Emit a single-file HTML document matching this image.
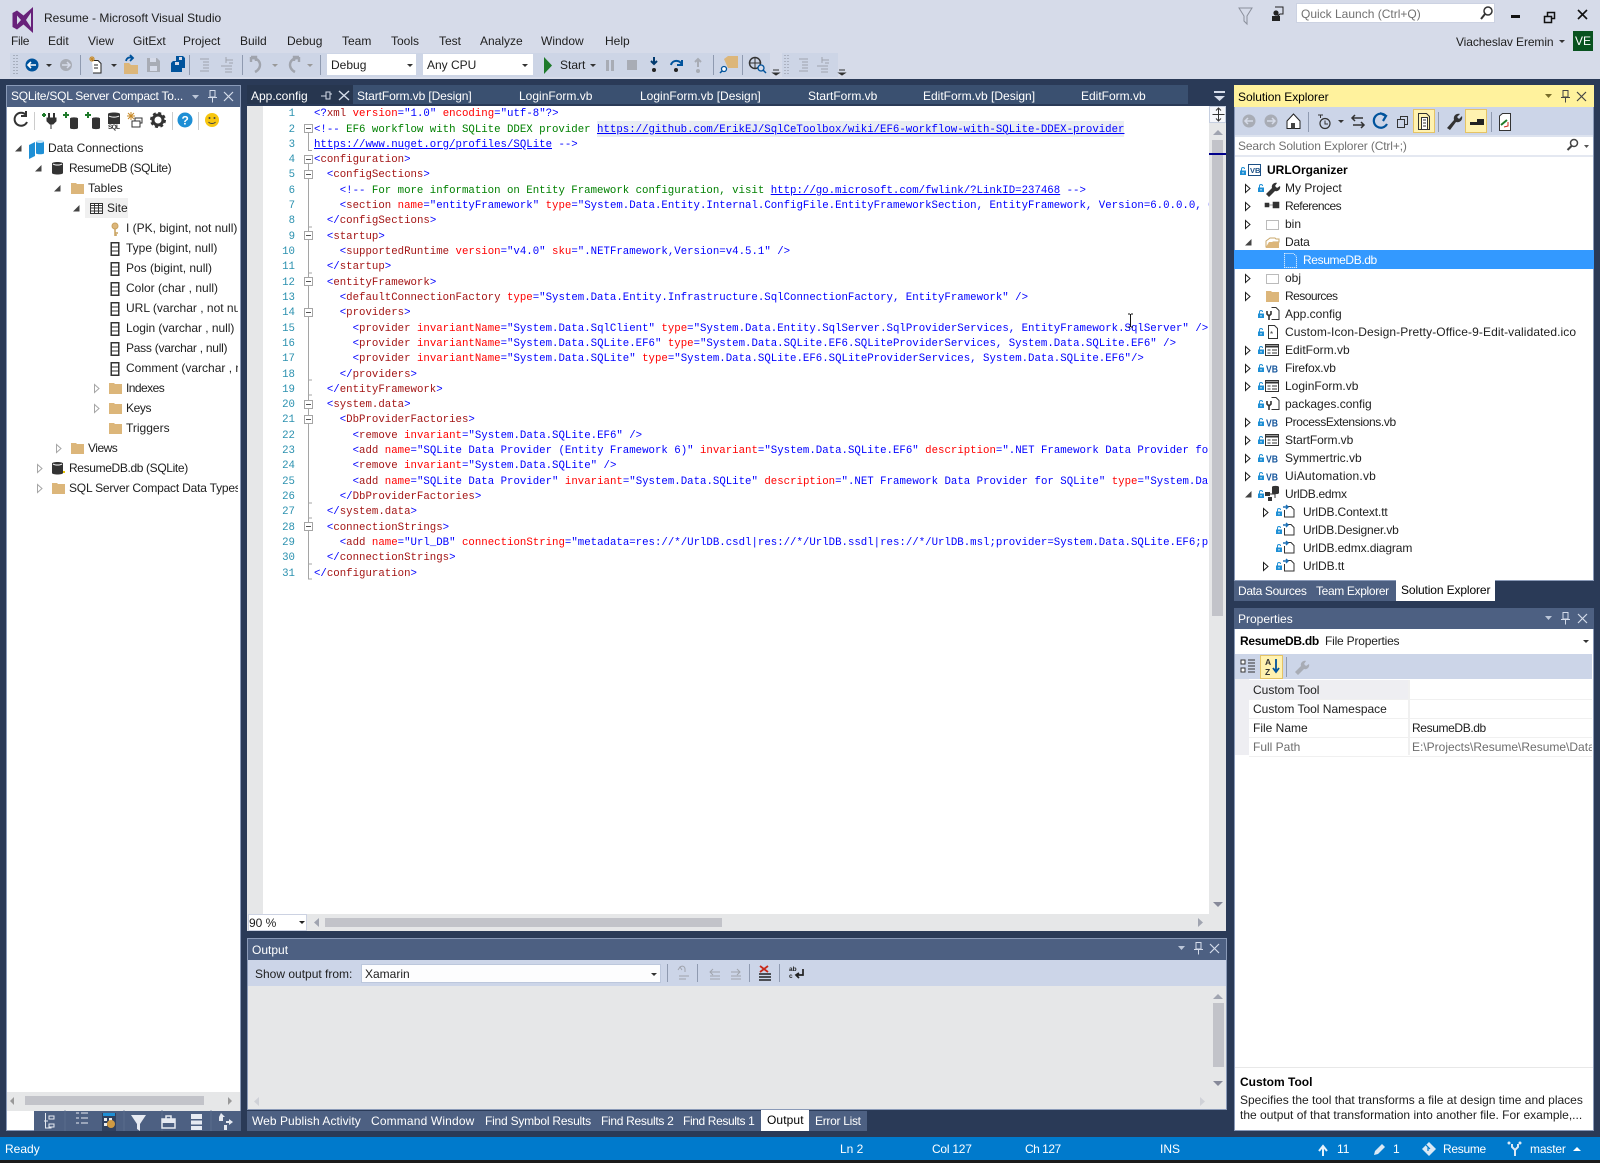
<!DOCTYPE html>
<html><head><meta charset="utf-8"><title>Resume - Microsoft Visual Studio</title>
<style>
html,body{margin:0;padding:0}
body{width:1600px;height:1163px;position:relative;overflow:hidden;background:#d6dbe9;font-family:"Liberation Sans",sans-serif;font-size:12px;color:#1e1e1e}
.b{position:absolute}
.t{position:absolute;white-space:nowrap;line-height:16px;font-size:12px}
.w{color:#fff}
.clip{position:absolute;overflow:hidden}
pre{margin:0;font-family:"Liberation Mono",monospace;font-size:10.72px;line-height:15.31px;white-space:pre}
.d{color:#0000ff}.e{color:#a31515}.a{color:#ff0000}.c{color:#008000}
.l{color:#0000ff;text-decoration:underline}
#nums{position:absolute;left:263px;top:107.2px;width:32px;text-align:right;color:#2b91af}
svg{position:absolute;left:0;top:0}
</style></head><body>
<!-- frame regions -->
<div class="b" style="left:0;top:79px;width:1600px;height:1058px;background:#2a3a57"></div>
<div class="b" style="left:0;top:1137px;width:1600px;height:23px;background:#007acc"></div>
<div class="b" style="left:0;top:1160px;width:1600px;height:3px;background:#1b1b1b"></div>
<!-- main toolbars -->
<div class="b" style="left:10px;top:53px;width:760px;height:24px;background:#cdd5e6"></div>
<div class="b" style="left:782px;top:53px;width:56px;height:24px;background:#cdd5e6"></div>
<div class="b" style="left:327px;top:54px;width:89px;height:21px;background:#fff"></div>
<div class="b" style="left:423px;top:54px;width:110px;height:21px;background:#fff"></div>
<div class="b" style="left:1296px;top:3px;width:199px;height:20px;background:#fff;box-sizing:border-box;border:1px solid #ccd2e2"></div>
<div class="b" style="left:1573px;top:31px;width:20px;height:20px;background:#08521f"></div>

<!-- left panel -->
<div class="b" style="left:6px;top:85px;width:235px;height:1046px;background:#fff;box-sizing:border-box;border:1px solid #8a9ab8"></div>
<div class="b" style="left:6px;top:85px;width:235px;height:22px;background:#4d6082;box-sizing:border-box;border:1px solid #8a9ab8;border-bottom:0"></div>
<div class="b" style="left:7px;top:1092px;width:233px;height:19px;background:#e6e7e8"></div>
<div class="b" style="left:25px;top:1096px;width:179px;height:9px;background:#c2c3c9"></div>
<div class="b" style="left:34px;top:1111px;width:207px;height:20px;background:#4d6082"></div>

<!-- doc area -->
<div class="b" style="left:247px;top:85px;width:106px;height:19px;background:#27364f"></div>
<div class="b" style="left:353px;top:85px;width:835px;height:19px;background:#3a5070"></div>
<div class="b" style="left:247px;top:104px;width:980px;height:2px;background:#2a3a57"></div>
<div class="b" style="left:247px;top:106px;width:979px;height:825px;background:#fff"></div>
<div class="b" style="left:247px;top:106px;width:16px;height:808px;background:#e6e7e8"></div>
<div class="b" style="left:1209px;top:106px;width:17px;height:825px;background:#e6e7e8"></div>
<div class="b" style="left:1212px;top:140px;width:11px;height:476px;background:#c2c3c9"></div>
<div class="b" style="left:1209px;top:106px;width:17px;height:17px;background:#f6f7fb;box-sizing:border-box;border:1px solid #c6cfe0"></div>
<div class="b" style="left:1209px;top:153px;width:17px;height:2px;background:#00008b"></div>
<div class="b" style="left:247px;top:914px;width:979px;height:17px;background:#e6e7e8"></div>
<div class="b" style="left:248px;top:914px;width:59px;height:17px;background:#fff;box-sizing:border-box;border:1px solid #ccd2e2"></div>
<div class="b" style="left:325px;top:918px;width:397px;height:9px;background:#c2c3c9"></div>
<div class="b" style="left:597px;top:121px;width:527px;height:16px;background:#e9edf3"></div>

<!-- output -->
<div class="b" style="left:247px;top:938px;width:980px;height:172px;background:#e6e7e8;box-sizing:border-box;border:1px solid #8a9ab8"></div>
<div class="b" style="left:247px;top:938px;width:980px;height:22px;background:#4d6082;box-sizing:border-box;border:1px solid #8a9ab8;border-bottom:0"></div>
<div class="b" style="left:248px;top:960px;width:978px;height:26px;background:#ccd5e8"></div>
<div class="b" style="left:361px;top:964px;width:300px;height:19px;background:#fdfdfe;box-sizing:border-box;border:1px solid #bcc7dc"></div>
<div class="b" style="left:1213px;top:1003px;width:11px;height:64px;background:#c2c3c9"></div>
<div class="b" style="left:247px;top:1111px;width:620px;height:20px;background:#4d6082"></div>
<div class="b" style="left:761px;top:1110px;width:48px;height:21px;background:#fff"></div>

<!-- solution explorer -->
<div class="b" style="left:1234px;top:85px;width:360px;height:496px;background:#fff;box-sizing:border-box;border:1px solid #8a9ab8"></div>
<div class="b" style="left:1234px;top:85px;width:360px;height:22px;background:#fff29d"></div>
<div class="b" style="left:1235px;top:107px;width:358px;height:28px;background:#ccd5e8"></div>
<div class="b" style="left:1235px;top:135px;width:358px;height:22px;background:#fff;border-bottom:0"></div>
<div class="b" style="left:1235px;top:135px;width:358px;height:2px;background:#dde3ef"></div>
<div class="b" style="left:1235px;top:155px;width:358px;height:2px;background:#e4e8f1"></div>
<div class="b" style="left:1413px;top:109px;width:22px;height:24px;background:#fff2b0;box-sizing:border-box;border:1px solid #e5c365"></div>
<div class="b" style="left:1465px;top:109px;width:22px;height:24px;background:#fff2b0;box-sizing:border-box;border:1px solid #e5c365"></div>
<div class="b" style="left:1234px;top:250px;width:360px;height:19px;background:#3399ff"></div>
<div class="b" style="left:1234px;top:581px;width:162px;height:20px;background:#4d6082"></div>
<div class="b" style="left:1396px;top:580px;width:99px;height:21px;background:#fff"></div>

<!-- properties -->
<div class="b" style="left:1234px;top:608px;width:360px;height:523px;background:#fff;box-sizing:border-box;border:1px solid #8a9ab8"></div>
<div class="b" style="left:1234px;top:608px;width:360px;height:21px;background:#4d6082"></div>
<div class="b" style="left:1235px;top:654px;width:357px;height:25px;background:#ccd5e8"></div>
<div class="b" style="left:1235px;top:679px;width:14px;height:76px;background:#eeeef2"></div>
<div class="b" style="left:1249px;top:680px;width:159px;height:19px;background:#eeeef2"></div>
<div class="b" style="left:1408px;top:680px;width:2px;height:75px;background:#f0f0f0"></div>
<div class="b" style="left:1249px;top:699px;width:343px;height:1px;background:#f0f0f0"></div>
<div class="b" style="left:1249px;top:718px;width:343px;height:1px;background:#f0f0f0"></div>
<div class="b" style="left:1249px;top:737px;width:343px;height:1px;background:#f0f0f0"></div>
<div class="b" style="left:1249px;top:756px;width:343px;height:1px;background:#f0f0f0"></div>
<div class="b" style="left:1235px;top:1067px;width:358px;height:1px;background:#e8e8e8"></div>

<!-- title / menu text -->
<div class="t" style="left:44px;top:10px">Resume - Microsoft Visual Studio</div>
<div class="t" style="left:11px;top:33px;letter-spacing:-.3px">File</div>
<div class="t" style="left:48px;top:33px">Edit</div>
<div class="t" style="left:88px;top:33px">View</div>
<div class="t" style="left:133px;top:33px">GitExt</div>
<div class="t" style="left:183px;top:33px">Project</div>
<div class="t" style="left:240px;top:33px">Build</div>
<div class="t" style="left:287px;top:33px">Debug</div>
<div class="t" style="left:342px;top:33px">Team</div>
<div class="t" style="left:391px;top:33px">Tools</div>
<div class="t" style="left:439px;top:33px">Test</div>
<div class="t" style="left:480px;top:33px">Analyze</div>
<div class="t" style="left:541px;top:33px">Window</div>
<div class="t" style="left:605px;top:33px">Help</div>
<div class="t" style="left:331px;top:57px">Debug</div>
<div class="t" style="left:427px;top:57px">Any CPU</div>
<div class="t" style="left:560px;top:57px">Start</div>
<div class="t" style="left:1301px;top:6px;color:#717171">Quick Launch (Ctrl+Q)</div>
<div class="t" style="left:1456px;top:34px;letter-spacing:-.1px">Viacheslav Eremin</div>
<div class="t w" style="left:1575px;top:33px">VE</div>

<!-- left panel text -->
<div class="t w" style="left:11px;top:88px;letter-spacing:-.24px">SQLite/SQL Server Compact To...</div>
<div class="clip" style="left:7px;top:130px;width:231px;height:370px">
<div class="t" style="left:41px;top:10px">Data Connections</div>
<div class="t" style="left:62px;top:30px;letter-spacing:-.42px">ResumeDB (SQLite)</div>
<div class="t" style="left:81px;top:50px">Tables</div>
<div class="b" style="left:78px;top:68px;width:43px;height:20px;background:#f0f0f0"></div>
<div class="t" style="left:100px;top:70px">Site</div>
<div class="t" style="left:119px;top:90px">I (PK, bigint, not null)</div>
<div class="t" style="left:119px;top:110px">Type (bigint, null)</div>
<div class="t" style="left:119px;top:130px">Pos (bigint, null)</div>
<div class="t" style="left:119px;top:150px">Color (char , null)</div>
<div class="t" style="left:119px;top:170px">URL (varchar , not null)</div>
<div class="t" style="left:119px;top:190px;letter-spacing:-.05px">Login (varchar , null)</div>
<div class="t" style="left:119px;top:210px;letter-spacing:-.26px">Pass (varchar , null)</div>
<div class="t" style="left:119px;top:230px">Comment (varchar , null)</div>
<div class="t" style="left:119px;top:250px;letter-spacing:-.55px">Indexes</div>
<div class="t" style="left:119px;top:270px;letter-spacing:-.4px">Keys</div>
<div class="t" style="left:119px;top:290px">Triggers</div>
<div class="t" style="left:81px;top:310px;letter-spacing:-.5px">Views</div>
<div class="t" style="left:62px;top:330px;letter-spacing:-.36px">ResumeDB.db (SQLite)</div>
<div class="t" style="left:62px;top:350px;letter-spacing:-.2px">SQL Server Compact Data Types</div>
</div>

<!-- doc tabs -->
<div class="t w" style="left:251px;top:88px">App.config</div>
<div class="t w" style="left:357px;top:88px;letter-spacing:-.1px">StartForm.vb [Design]</div>
<div class="t w" style="left:519px;top:88px">LoginForm.vb</div>
<div class="t w" style="left:640px;top:88px">LoginForm.vb [Design]</div>
<div class="t w" style="left:808px;top:88px">StartForm.vb</div>
<div class="t w" style="left:923px;top:88px">EditForm.vb [Design]</div>
<div class="t w" style="left:1081px;top:88px">EditForm.vb</div>

<!-- line numbers -->
<pre id="nums">1
2
3
4
5
6
7
8
9
10
11
12
13
14
15
16
17
18
19
20
21
22
23
24
25
26
27
28
29
30
31</pre>

<!-- code -->
<div class="clip" style="left:314px;top:106px;width:895px;height:600px">
<pre style="position:absolute;left:0;top:1.2px"><span class="d">&lt;?</span><span class="e">xml</span> <span class="a">version</span><span class="d">="1.0"</span> <span class="a">encoding</span><span class="d">="utf-8"?&gt;</span>
<span class="d">&lt;!--</span><span class="c"> EF6 workflow with SQLite DDEX provider </span><span class="l">https://github.com/ErikEJ/SqlCeToolbox/wiki/EF6-workflow-with-SQLite-DDEX-provider</span>
<span class="l">https://www.nuget.org/profiles/SQLite</span> <span class="d">--&gt;</span>
<span class="d">&lt;</span><span class="e">configuration</span><span class="d">&gt;</span>
  <span class="d">&lt;</span><span class="e">configSections</span><span class="d">&gt;</span>
    <span class="d">&lt;!--</span><span class="c"> For more information on Entity Framework configuration, visit </span><span class="l">http://go.microsoft.com/fwlink/?LinkID=237468</span> <span class="d">--&gt;</span>
    <span class="d">&lt;</span><span class="e">section</span> <span class="a">name</span><span class="d">="entityFramework"</span> <span class="a">type</span><span class="d">="System.Data.Entity.Internal.ConfigFile.EntityFrameworkSection, EntityFramework, Version=6.0.0.0, Culture=neutral"</span>
  <span class="d">&lt;/</span><span class="e">configSections</span><span class="d">&gt;</span>
  <span class="d">&lt;</span><span class="e">startup</span><span class="d">&gt;</span>
    <span class="d">&lt;</span><span class="e">supportedRuntime</span> <span class="a">version</span><span class="d">="v4.0"</span> <span class="a">sku</span><span class="d">=".NETFramework,Version=v4.5.1"</span> <span class="d">/&gt;</span>
  <span class="d">&lt;/</span><span class="e">startup</span><span class="d">&gt;</span>
  <span class="d">&lt;</span><span class="e">entityFramework</span><span class="d">&gt;</span>
    <span class="d">&lt;</span><span class="e">defaultConnectionFactory</span> <span class="a">type</span><span class="d">="System.Data.Entity.Infrastructure.SqlConnectionFactory, EntityFramework"</span> <span class="d">/&gt;</span>
    <span class="d">&lt;</span><span class="e">providers</span><span class="d">&gt;</span>
      <span class="d">&lt;</span><span class="e">provider</span> <span class="a">invariantName</span><span class="d">="System.Data.SqlClient"</span> <span class="a">type</span><span class="d">="System.Data.Entity.SqlServer.SqlProviderServices, EntityFramework.SqlServer"</span> <span class="d">/&gt;</span>
      <span class="d">&lt;</span><span class="e">provider</span> <span class="a">invariantName</span><span class="d">="System.Data.SQLite.EF6"</span> <span class="a">type</span><span class="d">="System.Data.SQLite.EF6.SQLiteProviderServices, System.Data.SQLite.EF6"</span> <span class="d">/&gt;</span>
      <span class="d">&lt;</span><span class="e">provider</span> <span class="a">invariantName</span><span class="d">="System.Data.SQLite"</span> <span class="a">type</span><span class="d">="System.Data.SQLite.EF6.SQLiteProviderServices, System.Data.SQLite.EF6"</span><span class="d">/&gt;</span>
    <span class="d">&lt;/</span><span class="e">providers</span><span class="d">&gt;</span>
  <span class="d">&lt;/</span><span class="e">entityFramework</span><span class="d">&gt;</span>
  <span class="d">&lt;</span><span class="e">system.data</span><span class="d">&gt;</span>
    <span class="d">&lt;</span><span class="e">DbProviderFactories</span><span class="d">&gt;</span>
      <span class="d">&lt;</span><span class="e">remove</span> <span class="a">invariant</span><span class="d">="System.Data.SQLite.EF6"</span> <span class="d">/&gt;</span>
      <span class="d">&lt;</span><span class="e">add</span> <span class="a">name</span><span class="d">="SQLite Data Provider (Entity Framework 6)"</span> <span class="a">invariant</span><span class="d">="System.Data.SQLite.EF6"</span> <span class="a">description</span><span class="d">=".NET Framework Data Provider for SQLite"</span>
      <span class="d">&lt;</span><span class="e">remove</span> <span class="a">invariant</span><span class="d">="System.Data.SQLite"</span> <span class="d">/&gt;</span>
      <span class="d">&lt;</span><span class="e">add</span> <span class="a">name</span><span class="d">="SQLite Data Provider"</span> <span class="a">invariant</span><span class="d">="System.Data.SQLite"</span> <span class="a">description</span><span class="d">=".NET Framework Data Provider for SQLite"</span> <span class="a">type</span><span class="d">="System.Data.SQLite"</span>
    <span class="d">&lt;/</span><span class="e">DbProviderFactories</span><span class="d">&gt;</span>
  <span class="d">&lt;/</span><span class="e">system.data</span><span class="d">&gt;</span>
  <span class="d">&lt;</span><span class="e">connectionStrings</span><span class="d">&gt;</span>
    <span class="d">&lt;</span><span class="e">add</span> <span class="a">name</span><span class="d">="Url_DB"</span> <span class="a">connectionString</span><span class="d">="metadata=res://*/UrlDB.csdl|res://*/UrlDB.ssdl|res://*/UrlDB.msl;provider=System.Data.SQLite.EF6;provider"</span>
  <span class="d">&lt;/</span><span class="e">connectionStrings</span><span class="d">&gt;</span>
<span class="d">&lt;/</span><span class="e">configuration</span><span class="d">&gt;</span></pre>
</div>
<div class="t" style="left:249px;top:915px">90 %</div>

<!-- output text -->
<div class="t w" style="left:252px;top:942px">Output</div>
<div class="t" style="left:255px;top:966px">Show output from:</div>
<div class="t" style="left:365px;top:966px">Xamarin</div>

<!-- bottom tabs -->
<div class="t w" style="left:252px;top:1113px;letter-spacing:.05px">Web Publish Activity</div>
<div class="t w" style="left:371px;top:1113px;letter-spacing:.15px">Command Window</div>
<div class="t w" style="left:485px;top:1113px;letter-spacing:-.22px">Find Symbol Results</div>
<div class="t w" style="left:601px;top:1113px;letter-spacing:-.3px">Find Results 2</div>
<div class="t w" style="left:683px;top:1113px;letter-spacing:-.38px">Find Results 1</div>
<div class="t" style="left:767px;top:1112px;color:#000;letter-spacing:.1px">Output</div>
<div class="t w" style="left:815px;top:1113px;letter-spacing:-.3px">Error List</div>

<!-- SE text -->
<div class="t" style="left:1238px;top:89px;color:#000;letter-spacing:-.05px">Solution Explorer</div>
<div class="t" style="left:1238px;top:138px;color:#717171;letter-spacing:-.13px">Search Solution Explorer (Ctrl+;)</div>
<div class="t" style="left:1267px;top:162px;font-weight:bold;color:#000">URLOrganizer</div>
<div class="t" style="left:1285px;top:180px">My Project</div>
<div class="t" style="left:1285px;top:198px;letter-spacing:-.52px">References</div>
<div class="t" style="left:1285px;top:216px">bin</div>
<div class="t" style="left:1285px;top:234px;letter-spacing:-.2px">Data</div>
<div class="t w" style="left:1303px;top:252px;letter-spacing:-.38px">ResumeDB.db</div>
<div class="t" style="left:1285px;top:270px">obj</div>
<div class="t" style="left:1285px;top:288px;letter-spacing:-.55px">Resources</div>
<div class="t" style="left:1285px;top:306px">App.config</div>
<div class="t" style="left:1285px;top:324px;letter-spacing:.1px">Custom-Icon-Design-Pretty-Office-9-Edit-validated.ico</div>
<div class="t" style="left:1285px;top:342px">EditForm.vb</div>
<div class="t" style="left:1285px;top:360px;letter-spacing:-.2px">Firefox.vb</div>
<div class="t" style="left:1285px;top:378px">LoginForm.vb</div>
<div class="t" style="left:1285px;top:396px">packages.config</div>
<div class="t" style="left:1285px;top:414px;letter-spacing:-.36px">ProcessExtensions.vb</div>
<div class="t" style="left:1285px;top:432px;letter-spacing:-.1px">StartForm.vb</div>
<div class="t" style="left:1285px;top:450px">Symmertric.vb</div>
<div class="t" style="left:1285px;top:468px;letter-spacing:.2px">UiAutomation.vb</div>
<div class="t" style="left:1285px;top:486px;letter-spacing:-.3px">UrlDB.edmx</div>
<div class="t" style="left:1303px;top:504px;letter-spacing:-.13px">UrlDB.Context.tt</div>
<div class="t" style="left:1303px;top:522px;letter-spacing:-.18px">UrlDB.Designer.vb</div>
<div class="t" style="left:1303px;top:540px;letter-spacing:-.12px">UrlDB.edmx.diagram</div>
<div class="t" style="left:1303px;top:558px;letter-spacing:-.1px">UrlDB.tt</div>
<div class="t w" style="left:1238px;top:583px;letter-spacing:-.35px">Data Sources</div>
<div class="t w" style="left:1316px;top:583px;letter-spacing:-.35px">Team Explorer</div>
<div class="t" style="left:1401px;top:582px;color:#000;letter-spacing:-.12px">Solution Explorer</div>

<!-- properties text -->
<div class="t w" style="left:1238px;top:611px">Properties</div>
<div class="t" style="left:1240px;top:633px;font-weight:bold;color:#000;letter-spacing:-.28px">ResumeDB.db</div>
<div class="t" style="left:1325px;top:633px;letter-spacing:-.2px">File Properties</div>
<div class="t" style="left:1253px;top:682px">Custom Tool</div>
<div class="t" style="left:1253px;top:701px">Custom Tool Namespace</div>
<div class="t" style="left:1253px;top:720px">File Name</div>
<div class="t" style="left:1412px;top:720px;letter-spacing:-.38px">ResumeDB.db</div>
<div class="t" style="left:1253px;top:739px;color:#6d6d6d">Full Path</div>
<div class="clip" style="left:1412px;top:737px;width:180px;height:18px"><div class="t" style="left:0;top:2px;color:#6d6d6d">E:\Projects\Resume\Resume\Data\ResumeDB.db</div></div>
<div class="t" style="left:1240px;top:1074px;font-weight:bold;color:#000">Custom Tool</div>
<div class="t" style="left:1240px;top:1092px">Specifies the tool that transforms a file at design time and places</div>
<div class="t" style="left:1240px;top:1107px">the output of that transformation into another file. For example,...</div>

<!-- status -->
<div class="t w" style="left:5px;top:1141px">Ready</div>
<div class="t w" style="left:840px;top:1141px">Ln 2</div>
<div class="t w" style="left:932px;top:1141px;letter-spacing:-.25px">Col 127</div>
<div class="t w" style="left:1025px;top:1141px;letter-spacing:-.5px">Ch 127</div>
<div class="t w" style="left:1160px;top:1141px">INS</div>
<div class="t w" style="left:1337px;top:1141px">11</div>
<div class="t w" style="left:1393px;top:1141px">1</div>
<div class="t w" style="left:1443px;top:1141px;letter-spacing:-.3px">Resume</div>
<div class="t w" style="left:1530px;top:1141px;letter-spacing:-.15px">master</div>

<!-- icons -->
<svg width="1600" height="1163" viewBox="0 0 1600 1163" xmlns="http://www.w3.org/2000/svg" font-family="Liberation Sans">
<defs>
<g id="hx"><path d="M.5 .5L5 4.5L.5 8.5z" fill="#fff" stroke="#a6a6a6"/></g>
<g id="sx"><path d="M.5 .5L5 4.5L.5 8.5z" fill="#fff" stroke="#1e1e1e"/></g>
<g id="fx"><path d="M6.5 0V6.5H0z" fill="#444"/></g>
<g id="lock"><path d="M1.5 3.5V2a1.5 1.5 0 0 1 3 0" fill="none" stroke="#1e8fd5"/><rect x="0" y="3.5" width="6" height="4.5" fill="#1e8fd5"/><rect x="2.5" y="5" width="1" height="1.5" fill="#fff"/></g>
<g id="fold"><path d="M0 2h5l1 1h7v10H0z" fill="#dcb67a"/></g>
<g id="dfold"><path d="M.5 3.5h12v9H.5z" fill="none" stroke="#777" stroke-dasharray="1 1"/></g>
<g id="col"><rect x=".75" y=".75" width="7.5" height="12.5" fill="#fff" stroke="#333" stroke-width="1.5"/><path d="M1 5h7M1 9h7" stroke="#333"/></g>
<g id="cyl"><path d="M0 2.500C0 .5 11 .5 11 2.500V12C11 14 0 14 0 12z" fill="#333"/><path d="M1 3c2 1.400 7 1.400 9 0" fill="none" stroke="#fff"/></g>
<g id="form"><rect x=".5" y=".5" width="13" height="11" fill="#fff" stroke="#333"/><path d="M0 1.500h14V3.500H0z" fill="#333"/><path d="M2.500 6h3M7 6h5M2.500 9h3M7 9h5" stroke="#333"/></g>
<g id="cfg"><path d="M5.500 .5H10l3 3V12.500H5.500" fill="#fff" stroke="#333"/><path d="M1 4v3l2 2 2-2V4M3 9v4" fill="none" stroke="#333" stroke-width="1.600"/></g>
<g id="tt"><path d="M3.500 2.500H8l3 3V13H1.500V6" fill="#fff" stroke="#333"/><path d="M0 3h4M3 1l2 2-2 2" fill="none" stroke="#1a6fb5" stroke-width="1.400"/></g>
<g id="vb"><text x="0" y="9.5" font-size="10.5" font-weight="bold" fill="#15569c" textLength="12" lengthAdjust="spacingAndGlyphs">VB</text></g>
<g id="dd"><path d="M0 0h6L3 3z" fill="#333"/></g>
<g id="ddg"><path d="M0 0h6L3 3z" fill="#999"/></g>
<g id="wdd"><path d="M0 0h7L3.500 4z" fill="#bcc6d8"/></g>
<g id="wpin"><path d="M2 .5h5V7H2zM0 7.500h9M4.500 7.500v5" fill="none" stroke="#d5dcea"/></g>
<g id="wx"><path d="M0 0L9 9M9 0L0 9" stroke="#d5dcea" stroke-width="1.200"/></g>
<g id="kpin"><path d="M2 .5h5V7H2zM0 7.500h9M4.500 7.500v5" fill="none" stroke="#444"/></g>
<g id="kx"><path d="M0 0L9 9M9 0L0 9" stroke="#444" stroke-width="1.200"/></g>
</defs>

<!-- VS logo -->
<path d="M33 7L23.500 15.500L17 10.500L12.500 13V27L17 29.500L23.500 24.500L33 33L33 7ZM17 15.500L21 20L17 24.500ZM31 12.500V27.500L26 20Z" fill="#68217a" fill-rule="evenodd"/>

<!-- title right icons -->
<path d="M1239 8H1252L1247 16V24L1244 21V16Z" fill="none" stroke="#8a8f9b"/>
<path d="M1275 7h8v7h-3l-2 2v-2" fill="none" stroke="#222"/><circle cx="1276" cy="13" r="2.600" fill="#222"/><rect x="1272" y="16" width="8" height="5" fill="#222"/>
<circle cx="1488" cy="11" r="4" fill="none" stroke="#333" stroke-width="1.500"/><path d="M1485 14L1481 19" stroke="#333" stroke-width="2"/>
<rect x="1511" y="15" width="9" height="3" fill="#111"/>
<path d="M1544.500 16.500h7v6h-7zM1547.500 16V12.500h7v6h-3" fill="none" stroke="#111" stroke-width="1.500"/>
<path d="M1578 10L1587 19M1587 10L1578 19" stroke="#111" stroke-width="1.600"/>
<use href="#dd" x="1559" y="40"/>

<!-- toolbar 1 -->
<path d="M14 55v20M17 55v20" stroke="#7f8694" stroke-dasharray="1 2"/>
<circle cx="32" cy="65" r="6.500" fill="#00539c"/><path d="M36 65h-7M31 62l-3 3 3 3" stroke="#fff" stroke-width="1.600" fill="none"/>
<use href="#dd" x="46" y="64"/>
<circle cx="66" cy="65" r="6" fill="#a8acb5"/><path d="M62 65h7M67 62l3 3-3 3" stroke="#d6dbe9" stroke-width="1.500" fill="none"/>
<rect x="80" y="55" width="1" height="20" fill="#8f9ab0"/>
<path d="M92 60.500h6l3 3V73H93" fill="#fff" stroke="#222"/><path d="M92 56v6M89 59h6M90 57l4 4M94 57l-4 4" stroke="#c78a2a"/><path d="M94 65h4M94 68h4" stroke="#222"/>
<use href="#dd" x="111" y="64"/>
<path d="M124 63h5l2 2h7v9h-14z" fill="#dcb67a"/><path d="M126 61c1-4 4-4 6-3M130 55l3 3-3 3" fill="none" stroke="#00539c" stroke-width="1.800"/>
<path d="M147 58h10l3 3v11h-13z" fill="#a8acb5"/><rect x="150" y="58" width="6" height="4" fill="#d6dbe9"/><rect x="150" y="66" width="7" height="5" fill="#d6dbe9"/>
<path d="M173 61h9v11h-11V63z" fill="#00539c"/><path d="M176 56h7l2 2v10h-3V61h-6z" fill="#00539c"/><rect x="175" y="62" width="4" height="3" fill="#d6dbe9"/><rect x="179" y="57" width="3" height="3" fill="#d6dbe9"/>
<rect x="189" y="55" width="1" height="20" fill="#8f9ab0"/>
<path d="M200 59h9M203 62h6M203 65h6M203 68h6M200 71h9" stroke="#a0a4ad"/>
<path d="M226 57v6M221 66h11M225 69h7M225 72h7M226 60h7M229 63h4" stroke="#a0a4ad"/>
<rect x="242" y="55" width="1" height="20" fill="#8f9ab0"/>
<path d="M251 57h5V61M251 57v5M252 58c9 0 11 10 3 14" fill="none" stroke="#a0a4ad" stroke-width="2.400"/>
<use href="#ddg" x="272" y="64"/>
<path d="M299 57h-5V61M299 57v5M298 58c-9 0-11 10-3 14" fill="none" stroke="#a0a4ad" stroke-width="2.400"/>
<use href="#ddg" x="307" y="64"/>
<rect x="320" y="55" width="1" height="20" fill="#8f9ab0"/>
<use href="#dd" x="407" y="64"/><use href="#dd" x="522" y="64"/>
<path d="M544 57V74L552 65.500Z" fill="#1e7a2a"/>
<use href="#dd" x="590" y="64"/>
<path d="M606 60h3v11h-3zM611 60h3v11h-3z" fill="#a8acb5"/>
<rect x="627" y="60" width="10" height="10" fill="#a8acb5"/>
<path d="M654 57v7M651 61l3 3 3-3" fill="none" stroke="#00396e" stroke-width="2"/><circle cx="654" cy="70" r="2" fill="#222"/>
<path d="M671 65c1-5 9-6 11 0M682 60v5h-5" fill="none" stroke="#00539c" stroke-width="2"/><circle cx="676" cy="70" r="2" fill="#222"/>
<path d="M698 67v-8M695 62l3-3 3 3" fill="none" stroke="#a8acb5" stroke-width="2"/><circle cx="698" cy="71" r="2" fill="#a8acb5"/>
<rect x="713" y="55" width="1" height="20" fill="#8f9ab0"/>
<path d="M724 59l4-3h10v12h-10z" fill="#dcb67a"/><circle cx="724" cy="69" r="2.500" fill="#fff" stroke="#00539c" stroke-width="1.300"/><path d="M722 71l-2 2" stroke="#00539c" stroke-width="1.500"/>
<rect x="742" y="55" width="1" height="20" fill="#8f9ab0"/>
<circle cx="755" cy="63" r="5.500" fill="none" stroke="#333" stroke-width="1.500"/><path d="M750 63h11M755 58v10" stroke="#333"/><circle cx="761" cy="68" r="3" fill="#d6dbe9" stroke="#00539c" stroke-width="1.300"/><path d="M763 70l3 3" stroke="#00539c" stroke-width="1.500"/>
<path d="M773 70h6M773 73h6L776 75z" stroke="#333" fill="#333"/>
<path d="M785 55v20M788 55v20" stroke="#8a909c" stroke-dasharray="1 2"/>
<path d="M799 59h9M802 62h6M802 65h6M802 68h6M799 71h9" stroke="#a0a4ad"/>
<path d="M822 57v6M817 66h11M821 69h7M821 72h7M822 60h7M825 63h4" stroke="#a0a4ad"/>
<path d="M839 70h6M839 73h6L842 75z" stroke="#333" fill="#333"/>

<!-- left panel header icons -->
<use href="#wdd" x="192" y="95"/><use href="#wpin" x="208" y="90"/><use href="#wx" x="224" y="92"/>
<!-- left toolbar -->
<path d="M26 115a6.500 6.500 0 1 0 1 7M26 111v5h-5" fill="none" stroke="#333" stroke-width="2"/>
<rect x="34" y="112" width="1" height="18" fill="#ccc"/>
<path d="M42 115h4M44 113v4" stroke="#1e7a2a" stroke-width="2"/><path d="M49 113v5M54 113v5" stroke="#333" stroke-width="2"/><path d="M47 118h9v3l-3 3h-3l-3-3zM51 124v5" fill="#333" stroke="#333"/>
<path d="M63 115h6M66 112v6" stroke="#1e7a2a" stroke-width="2"/><path d="M70 118.500c0-1.500 8-1.500 8 0V128c0 1.500-8 1.500-8 0z" fill="#333"/>
<path d="M85 115h6M88 112v6" stroke="#1e7a2a" stroke-width="2"/><path d="M92 118.500c0-1.500 8-1.500 8 0V128c0 1.500-8 1.500-8 0z" fill="#333"/>
<path d="M108 114c0-2 12-2 12 0v10h-12z" fill="#333"/><path d="M109 116c2 1.500 8 1.500 10 0" stroke="#fff" fill="none"/><text x="108" y="129" font-size="6.500" font-weight="bold" fill="#333" textLength="12">SQL</text>
<path d="M131 112v8M127 116h8M128 113l6 6M134 113l-6 6" stroke="#c78a2a"/><rect x="135" y="118" width="7" height="5" fill="none" stroke="#333"/><rect x="132" y="121" width="8" height="6" fill="#fff" stroke="#333"/>
<circle cx="158" cy="120" r="5" fill="none" stroke="#333" stroke-width="3"/><circle cx="158" cy="120" r="7" fill="none" stroke="#333" stroke-width="2" stroke-dasharray="3 2.500"/>
<rect x="172" y="112" width="1" height="18" fill="#ccc"/>
<circle cx="185" cy="120" r="7.500" fill="#1e8fd5"/><text x="181.500" y="124.500" font-size="12" font-weight="bold" fill="#fff">?</text>
<rect x="198" y="112" width="1" height="18" fill="#ccc"/>
<circle cx="212" cy="120" r="7" fill="#f7c610"/><circle cx="209.500" cy="118" r="1" fill="#444"/><circle cx="214.500" cy="118" r="1" fill="#444"/><path d="M208.500 122c1.500 2 5.500 2 7 0" fill="none" stroke="#444"/>

<!-- left tree icons -->
<use href="#fx" x="15" y="145"/>
<path d="M29 145l6-3v14l-6 3z" fill="#1e8fd5"/><path d="M36 141.500c2-1 6-1 8 0v12c-2 1-6 1-8 0z" fill="#1e8fd5"/><ellipse cx="40" cy="141.500" rx="4" ry="1.500" fill="#c9e6f7"/>
<use href="#fx" x="35" y="165"/>
<use href="#cyl" x="52" y="161"/>
<use href="#fx" x="54" y="185"/>
<use href="#fold" x="71" y="181"/>
<use href="#fx" x="73" y="205"/>
<rect x="90.500" y="203.500" width="12" height="10" fill="#fff" stroke="#333"/><path d="M90 205.500h13M90 208h13M90 211h13M94.500 204v10M98.500 204v10" stroke="#333"/>
<circle cx="115" cy="226" r="3" fill="#dcb67a" stroke="#c9a25f"/><path d="M115 229v7M115 233h3M115 235h2" stroke="#c9a25f" stroke-width="1.500"/>
<use href="#col" x="110.500" y="242"/><use href="#col" x="110.500" y="262"/><use href="#col" x="110.500" y="282"/><use href="#col" x="110.500" y="302"/><use href="#col" x="110.500" y="322"/><use href="#col" x="110.500" y="342"/><use href="#col" x="110.500" y="362"/>
<use href="#hx" x="94" y="384"/><use href="#fold" x="109" y="381"/>
<use href="#hx" x="94" y="404"/><use href="#fold" x="109" y="401"/>
<use href="#fold" x="109" y="421"/>
<use href="#hx" x="56" y="444"/><use href="#fold" x="71" y="441"/>
<use href="#hx" x="37" y="464"/><use href="#cyl" x="52" y="461"/><rect x="63" y="471" width="2" height="2" fill="#e8c300"/>
<use href="#hx" x="37" y="484"/><use href="#fold" x="52" y="481"/>

<!-- left scroll and bottom tabs -->
<path d="M14 1097v8l-4-4z" fill="#999"/><path d="M228 1097v8l4-4z" fill="#999"/>
<path d="M65 1110v21M124 1110v21M162 1110v21M211 1110v21" stroke="#5f7191" stroke-width=".7"/>
<path d="M44 1120h4M45.500 1112v15h6M49 1115h5v3h-5zM49 1123h5v3h-5z" transform="translate(0 1)" fill="none" stroke="#e6eaf2"/>
<path d="M76 1114h3M76 1119h3M76 1124h3M81 1114h7M81 1119h7M81 1124h7" stroke="#e6eaf2" transform="translate(0 -1)"/>
<rect x="102" y="1113" width="14" height="18" fill="#30405e"/><path d="M103 1113h12v3h-12z" fill="#1e8fd5"/><path d="M104 1118h3v3h-3zM109 1118h3v3h-3zM104 1123h3v3h-3zM109 1123h3v3h-3z" fill="#eee"/><circle cx="111" cy="1124" r="4" fill="#d09a42"/>
<path d="M131 1115h15l-6 9v7l-3-2v-5z" fill="#e6eaf2"/>
<path d="M162 1119h13v9h-13zM166 1119v-3h5v3" fill="none" stroke="#e6eaf2" stroke-width="1.500"/><rect x="162" y="1119" width="13" height="4" fill="#e6eaf2"/>
<path d="M191 1114h11v5h-11zM191 1120.500h11v4h-11zM191 1126h11v4h-11z" fill="#e6eaf2"/>
<path d="M221 1113l4 4h-2v4h-4v-4zM229 1119l4 3-4 3v-2h-3v-2h3zM224 1125h3v5h-3z" fill="#e6eaf2"/>

<!-- tab pin / close -->
<path d="M321 96h5M326 92v7h4v-7zM330 94h2" fill="none" stroke="#d5dcea"/>
<path d="M339 91L349 100M349 91L339 100" stroke="#d5dcea" stroke-width="1.400"/>
<path d="M1214 91h11v2h-11zM1214 96h11L1219.500 101z" fill="#d5dcea"/>

<!-- fold margin -->
<g fill="none" stroke="#a5a5a5">
<path d="M308.500 133V135M308.500 135V150.500H312"/>
<path d="M308.500 164V579H312"/>
<path d="M308.500 227H312M308.500 273H312M308.500 380H312M308.500 395H312M308.500 503H312M308.500 518H312M308.500 564H312"/>
</g>
<g fill="#fff" stroke="#a5a5a5">
<rect x="304.500" y="124.500" width="8" height="8"/><rect x="304.500" y="155.500" width="8" height="8"/><rect x="304.500" y="170.500" width="8" height="8"/><rect x="304.500" y="231.500" width="8" height="8"/><rect x="304.500" y="277.500" width="8" height="8"/><rect x="304.500" y="308.500" width="8" height="8"/><rect x="304.500" y="400.500" width="8" height="8"/><rect x="304.500" y="415.500" width="8" height="8"/><rect x="304.500" y="522.500" width="8" height="8"/>
</g>
<path d="M306 128.500h5M306 159.500h5M306 174.500h5M306 235.500h5M306 281.500h5M306 312.500h5M306 404.500h5M306 419.500h5M306 526.500h5" stroke="#555"/>

<!-- editor scrollbar glyphs -->
<path d="M1212.500 114.500h12M1218.500 108v13M1216 110.500l2.500-2.500 2.500 2.500M1216 118.500l2.500 2.500 2.500-2.500" fill="none" stroke="#333"/>
<path d="M1213 135l5-5 5 5z" fill="#a0a4b0"/>
<path d="M1213 902l5 5 5-5z" fill="#868999"/>
<path d="M319 918v9l-5-4.500z" fill="#a0a4b0"/><path d="M1198 918v9l5-4.500z" fill="#a0a4b0"/>
<path d="M299 921h6l-3 3z" fill="#222"/>
<!-- I-beam -->
<path d="M1128 314h2M1133 314h-2M1130.500 314v13M1128 327h2M1133 327h-2" stroke="#111" fill="none"/>

<!-- output icons -->
<use href="#wdd" x="1178" y="946"/><use href="#wpin" x="1194" y="942"/><use href="#wx" x="1210" y="944"/>
<use href="#dd" x="651" y="973"/>
<rect x="667" y="964" width="1" height="18" fill="#8f9ab0"/>
<rect x="697" y="964" width="1" height="18" fill="#8f9ab0"/>
<rect x="749" y="964" width="1" height="18" fill="#8f9ab0"/>
<rect x="779" y="964" width="1" height="18" fill="#8f9ab0"/>
<path d="M680 967c3-2 5 0 5 2v3M678 970l2-3 2 3M679 976h10M679 979h7" fill="none" stroke="#a0a4ad"/>
<path d="M713 969l-3 3 3 3M710 972h10M710 976h10M710 979h10" fill="none" stroke="#a0a4ad"/>
<path d="M737 969l3 3-3 3M740 972h-9M731 976h10M731 979h10" fill="none" stroke="#a0a4ad"/>
<path d="M760 966l8 6M768 966l-8 6" stroke="#c8291a" stroke-width="1.800"/><path d="M759 974h12M759 977h12M759 980h12" stroke="#222" stroke-width="1.400"/>
<text x="789" y="971" font-size="6.500" font-weight="bold" fill="#222">ab</text><text x="789" y="978" font-size="6.500" font-weight="bold" fill="#222">c</text><path d="M803 969v6h-6M799 973l-3 2 3 3" fill="none" stroke="#222" stroke-width="1.700"/>
<path d="M1213 999l5-5 5 5z" fill="#a0a4b0"/><path d="M1213 1081l5 5 5-5z" fill="#868999"/>
<path d="M1200 1097v9l5-4.500z" fill="#cfd1d7"/><path d="M259 1097v9l-5-4.500z" fill="#cfd1d7"/>

<!-- SE header -->
<path d="M1545 94h7l-3.500 4z" fill="#7a6e2a"/><use href="#kpin" x="1561" y="90"/><use href="#kx" x="1577" y="92"/>
<!-- SE toolbar -->
<circle cx="1249" cy="121" r="6.500" fill="#a8acb5"/><path d="M1253 121h-7M1248 118l-3 3 3 3" stroke="#d6dbe9" stroke-width="1.500" fill="none"/>
<circle cx="1271" cy="121" r="6.500" fill="#a8acb5"/><path d="M1267 121h7M1272 118l3 3-3 3" stroke="#d6dbe9" stroke-width="1.500" fill="none"/>
<path d="M1287 121l6.500-7 6.500 7v7.500h-13z" fill="#fff" stroke="#222"/><rect x="1291" y="123" width="4" height="5.500" fill="#444"/>
<rect x="1308" y="112" width="1" height="20" fill="#8f9ab0"/>
<circle cx="1325" cy="123.500" r="5" fill="none" stroke="#333" stroke-width="1.200"/><path d="M1325 120.500v3.500h3M1318 115h5M1320.500 115v3" fill="none" stroke="#333"/>
<use href="#dd" x="1338" y="120"/>
<path d="M1352 118h11M1355 115l-3 3 3 3M1364 125h-11M1361 122l3 3-3 3" fill="none" stroke="#333" stroke-width="1.500"/>
<path d="M1386 116a7 7 0 1 0 1 8M1380 113l6 3-3 5" fill="none" stroke="#00539c" stroke-width="2.200"/>
<rect x="1400.500" y="116.500" width="7" height="8" fill="none" stroke="#333"/><rect x="1397.500" y="119.500" width="7" height="8" fill="#ccd5e8" stroke="#333"/>
<path d="M1418.500 113.500h8l3 3v13h-11z" fill="#fff2b0" stroke="#333"/><rect x="1421.500" y="117.500" width="6" height="12" fill="#fff" stroke="#333"/><path d="M1423 120h3M1423 123h3M1423 126h3" stroke="#333"/>
<rect x="1438" y="112" width="1" height="20" fill="#8f9ab0"/>
<path d="M1447 128l7-8c-1-4 2-7 6-6l-3 3 2 2 3-3c1 4-2 7-6 6l-6 8z" fill="#333"/>
<path d="M1470 122h7v-3h7v6h-14z" fill="#222"/>
<rect x="1491" y="112" width="1" height="20" fill="#8f9ab0"/>
<path d="M1502.500 113.500h8v17h-11V116z" fill="#fff" stroke="#333"/><path d="M1501 125l6-5" stroke="#1e7a2a" stroke-width="2"/><path d="M1504 127l4-1v-4" stroke="#c8291a" fill="none"/>
<!-- SE search -->
<circle cx="1574" cy="143" r="3.500" fill="none" stroke="#444" stroke-width="1.500"/><path d="M1571.500 146l-4 4" stroke="#444" stroke-width="2"/>
<path d="M1584 145h5l-2.500 3z" fill="#555"/>

<!-- SE tree icons -->
<use href="#lock" x="1240" y="167"/>
<rect x="1248.500" y="164.500" width="12" height="11" fill="#fff" stroke="#1a4f85"/><text x="1250" y="173" font-size="7.500" font-weight="bold" fill="#1a4f85">VB</text>
<use href="#sx" x="1245" y="184"/><use href="#lock" x="1258" y="184"/><path d="M1266 194l6-6c-1-3 2-6 5-5l-2 3 2 2 3-2c1 3-2 6-5 5l-6 6z" fill="#333"/>
<use href="#sx" x="1245" y="202"/><path d="M1265 203h4v4h-4zM1273 202h6v6h-6zM1269 205h4" fill="#333" stroke="#333" stroke-width=".6"/>
<use href="#sx" x="1245" y="220"/><use href="#dfold" x="1266" y="217"/>
<use href="#fx" x="1245" y="239"/><path d="M1266 241l4-3h5l1 1h3v3h-6l-4 5h-3z" fill="none" stroke="#c8a76a"/><path d="M1266 247l3-5h10v6h-13z" fill="#dcb67a"/>
<path d="M1284.500 253.500h9l3 3v11h-12z" fill="#3399ff" stroke="#fff" stroke-dasharray="1 1"/>
<use href="#sx" x="1245" y="274"/><use href="#dfold" x="1266" y="271"/>
<use href="#sx" x="1245" y="292"/><use href="#fold" x="1266" y="289"/>
<use href="#lock" x="1258" y="310"/><use href="#cfg" x="1266" y="307"/>
<use href="#lock" x="1258" y="328"/><path d="M1268.500 325.500h6l3 3v10h-9z" fill="#fff" stroke="#333"/><text x="1270" y="337" font-size="8" fill="#333">*</text>
<use href="#sx" x="1245" y="346"/><use href="#lock" x="1258" y="346"/><use href="#form" x="1265" y="344"/>
<use href="#sx" x="1245" y="364"/><use href="#lock" x="1258" y="364"/><use href="#vb" x="1266" y="363"/>
<use href="#sx" x="1245" y="382"/><use href="#lock" x="1258" y="382"/><use href="#form" x="1265" y="380"/>
<use href="#lock" x="1258" y="400"/><use href="#cfg" x="1266" y="397"/>
<use href="#sx" x="1245" y="418"/><use href="#lock" x="1258" y="418"/><use href="#vb" x="1266" y="417"/>
<use href="#sx" x="1245" y="436"/><use href="#lock" x="1258" y="436"/><use href="#form" x="1265" y="434"/>
<use href="#sx" x="1245" y="454"/><use href="#lock" x="1258" y="454"/><use href="#vb" x="1266" y="453"/>
<use href="#sx" x="1245" y="472"/><use href="#lock" x="1258" y="472"/><use href="#vb" x="1266" y="471"/>
<use href="#fx" x="1245" y="491"/><use href="#lock" x="1258" y="490"/><path d="M1272 487c0-1.500 7-1.500 7 0v6c0 1.500-7 1.500-7 0z" fill="#333"/><path d="M1265 492h5v4h-5zM1268 497h4v4h-4z" fill="#333"/><path d="M1270 494h5v4" fill="none" stroke="#333"/>
<use href="#sx" x="1263" y="508"/><use href="#lock" x="1276" y="508"/><use href="#tt" x="1283" y="504"/>
<use href="#lock" x="1276" y="526"/><use href="#tt" x="1283" y="522"/>
<use href="#lock" x="1276" y="544"/><use href="#tt" x="1283" y="540"/>
<use href="#sx" x="1263" y="562"/><use href="#lock" x="1276" y="562"/><use href="#tt" x="1283" y="558"/>

<!-- properties icons -->
<use href="#wdd" x="1545" y="616"/><use href="#wpin" x="1561" y="612"/><use href="#wx" x="1578" y="614"/>
<use href="#dd" x="1583" y="640"/>
<rect x="1241" y="660" width="4" height="4" fill="#fff" stroke="#333"/><rect x="1241" y="668" width="4" height="4" fill="#fff" stroke="#333"/><path d="M1248 660h7M1248 663h7M1248 666h7M1248 669h7M1248 672h7" stroke="#333"/>
<rect x="1260.500" y="655.500" width="22" height="23" fill="#fff2b0" stroke="#e5c365"/>
<text x="1265" y="665" font-size="8.500" font-weight="bold" fill="#333">A</text><text x="1265" y="675" font-size="8.500" font-weight="bold" fill="#333">Z</text><path d="M1276 659v13M1273 668l3 4 3-4" fill="none" stroke="#00539c" stroke-width="1.800"/>
<rect x="1286" y="657" width="1" height="20" fill="#8f9ab0"/>
<path d="M1295 672l6-6c-1-3 2-6 5-5l-2 3 2 2 3-2c1 3-2 6-5 5l-6 6z" fill="#a8acb5"/>

<!-- status icons -->
<path d="M1323 1156v-9M1319 1151l4-5 4 5" fill="none" stroke="#e6f2fb" stroke-width="2"/>
<path d="M1374 1155l1-4 7-7 3 3-7 7z" fill="#dbe9f5"/>
<path d="M1429 1142l7 7-7 7-7-7z" fill="#dbe9f5"/><path d="M1428 1147v4M1426 1145l4 4" stroke="#007acc" stroke-width="1.200"/>
<path d="M1512 1144v3l3 3 3-3v-3M1515 1150v6" fill="none" stroke="#dbe9f5" stroke-width="2"/><circle cx="1509" cy="1143" r="1.500" fill="#dbe9f5"/><circle cx="1520" cy="1143" r="1.500" fill="#dbe9f5"/>
<path d="M1573 1151h8l-4-4z" fill="#fff"/>
</svg>
</body></html>
